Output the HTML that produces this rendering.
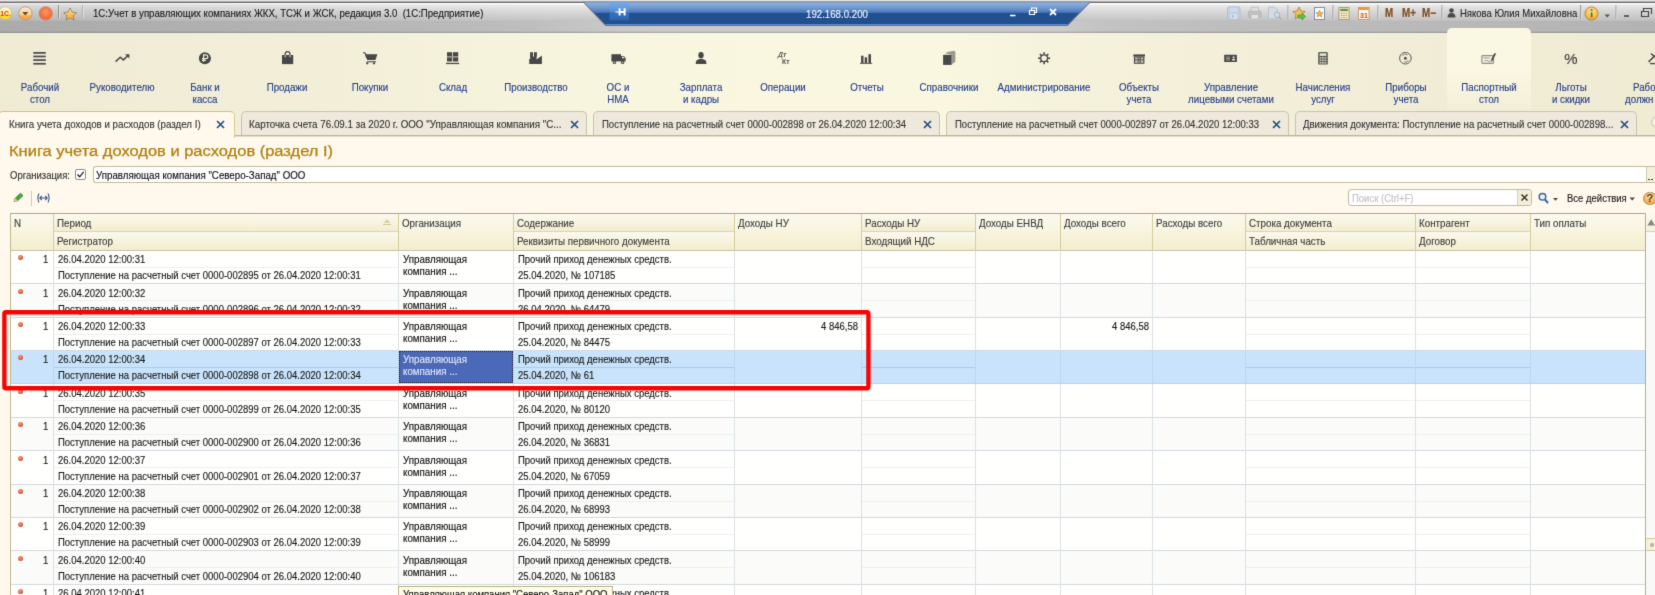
<!DOCTYPE html><html lang="ru"><head><meta charset="utf-8"><title>1C</title><style>
*{margin:0;padding:0;box-sizing:border-box}
html,body{width:1655px;height:595px;overflow:hidden}
body{filter:url(#soft)}
.t,.hd,.tabt,.sec{-webkit-text-stroke:.15px currentColor}
body{position:relative;background:#fff8ec;font-family:"Liberation Sans",sans-serif;font-size:11px;color:#1a1a1a}
.a{position:absolute}
.t{position:absolute;white-space:pre;line-height:12px;height:12px;transform:scaleX(.864);transform-origin:0 0}
.c{text-align:center}
.sec{position:absolute;top:81.900px;width:140px;text-align:center;color:#273f8c;font-size:11px;line-height:11.8px;white-space:pre;transform:scaleX(.885);transform-origin:50% 0}
.tab{position:absolute;top:111px;height:25px;border:1px solid #c9c3b0;border-bottom:none;border-radius:5px 5px 0 0;background:#efe9dc}
.tabt{position:absolute;top:118px;white-space:pre;line-height:12px;color:#363636;transform:scaleX(.868);transform-origin:0 0}
.hd{position:absolute;white-space:pre;line-height:12px;color:#3f3f3f;transform:scaleX(.89);transform-origin:0 0}
.vl{position:absolute;width:1px;background:#dbe1e4}
.hl{position:absolute;height:1px;background:#d3dce3}
.sl{position:absolute;height:1px;background:#eef1f3}
</style></head><body>
<svg width="0" height="0" style="position:absolute"><defs><filter id="soft" x="0" y="0" width="100%" height="100%" color-interpolation-filters="sRGB"><feConvolveMatrix order="3" kernelMatrix="0.0113 0.0839 0.0113 0.0839 0.6192 0.0839 0.0113 0.0839 0.0113" divisor="1" edgeMode="duplicate" preserveAlpha="true"/></filter></defs></svg>
<div class="a" style="left:0;top:0;width:1655px;height:595px;background:#fff8ec"></div>
<div class="a" style="left:0;top:0;width:1655px;height:33px;background:linear-gradient(#e6e6e6 0,#e6e6e6 1.3px,#707070 1.7px,#707070 2.6px,#ffffff 2.9px,#fdfdfd 4.2px,#ebebeb 5px,#dadada 11px,#c6c6c6 20px,#bdbdbd 21px)"></div>
<div class="a" style="left:0;top:2.500px;width:1655px;height:20px;background:linear-gradient(to right,rgba(0,0,0,.07) 0,rgba(0,0,0,.05) 200px,rgba(0,0,0,0) 560px,rgba(0,0,0,0) 1100px,rgba(0,0,0,.02) 1655px)"></div>
<div class="a" style="left:0;top:21px;width:1655px;height:12px;background:linear-gradient(to right,#ababab 0,#b0b0b0 200px,#b8b8b8 420px,#bebebe 530px,#c7c7c7 600px,#cbcbcb 660px,#cbcbcb 1060px,#c3c3c3 1100px,#c0c0c0 1160px,#bcbcbc 1300px,#b3b3b3 1655px)"></div>
<div class="a" style="left:0;top:30.500px;width:1655px;height:2.500px;background:linear-gradient(rgba(110,110,110,0),rgba(110,110,110,.5))"></div>
<svg class="a" style="left:0;top:0" width="1655" height="33" viewBox="0 0 1655 33"><defs><linearGradient id="bl" x1="0" y1="0" x2="0" y2="1"><stop offset="0" stop-color="#8fb2e0"/><stop offset="0.17" stop-color="#7aa2d6"/><stop offset="0.35" stop-color="#5c89c6"/><stop offset="0.46" stop-color="#4270b2"/><stop offset="0.49" stop-color="#21508f"/><stop offset="0.9" stop-color="#21508f"/><stop offset="0.96" stop-color="#1d4a87"/><stop offset="0.97" stop-color="#5f8ed0"/><stop offset="1" stop-color="#5f8ed0"/></linearGradient><linearGradient id="gb" x1="0" y1="0" x2="1" y2="0"><stop offset="0" stop-color="#adadad"/><stop offset="0.08" stop-color="#d3d3d3"/><stop offset="0.85" stop-color="#d3d3d3"/><stop offset="1" stop-color="#b4b4b4"/></linearGradient></defs><path d="M582.5 1.8 L1091 1.8 L1067.5 26 L605.5 26 Z" fill="#6b6e78"/><path d="M584 2.2 L1089.5 2.2 L1067 25 L606 25 Z" fill="url(#bl)"/><defs><linearGradient id="pg" x1="0" y1="0" x2="0" y2="1"><stop offset="0" stop-color="#74aae4"/><stop offset="0.5" stop-color="#5b92d6"/><stop offset="0.56" stop-color="#3a74c0"/><stop offset="1" stop-color="#2c63ad"/></linearGradient></defs><rect x="609.5" y="2.3" width="19.5" height="18" fill="url(#pg)"/><path d="M615.3 12 H619" stroke="#dfeaf8" stroke-width="1.3" fill="none"/><path d="M619.6 8.3 V15.6 M619.6 12 H624.6 M624.6 8.3 V15.6" stroke="#fff" stroke-width="2" fill="none"/><path d="M1010 15.5 H1015.5" stroke="#fff" stroke-width="1.6"/><path d="M1029.5 10.5 h5 v4 h-5 z M1031.5 10 v-2 h5 v4.5 h-2" stroke="#fff" stroke-width="1.2" fill="none"/><path d="M1050 9 L1056 15 M1056 9 L1050 15" stroke="#fff" stroke-width="1.8"/></svg>
<div class="t" style="left:806px;top:7.600px;color:#eef3fb;font-size:11px;transform:scaleX(.88)">192.168.0.200</div>
<svg class="a" style="left:0;top:0" width="95" height="33" viewBox="0 0 95 33"><defs><linearGradient id="og" x1="0" y1="0" x2="0" y2="1"><stop offset="0" stop-color="#fdeacb"/><stop offset="0.55" stop-color="#fbd39a"/><stop offset="0.7" stop-color="#f8ad4e"/><stop offset="1" stop-color="#f6a443"/></linearGradient><radialGradient id="rg" cx="0.5" cy="0.4" r="0.65"><stop offset="0" stop-color="#fb9a72"/><stop offset="0.55" stop-color="#f8743f"/><stop offset="1" stop-color="#f0602c"/></radialGradient><linearGradient id="yg" x1="0" y1="0" x2="0" y2="1"><stop offset="0" stop-color="#fff9d8"/><stop offset="0.5" stop-color="#fff0a0"/><stop offset="0.75" stop-color="#ffe22e"/><stop offset="1" stop-color="#fbd020"/></linearGradient><linearGradient id="sg" x1="0" y1="0" x2="0" y2="1"><stop offset="0" stop-color="#ffe7ae"/><stop offset="0.6" stop-color="#fbb848"/><stop offset="1" stop-color="#f5a535"/></linearGradient></defs><circle cx="5.2" cy="13.2" r="6.4" fill="url(#yg)" stroke="#cdb88a" stroke-width="0.7"/><text x="0.3" y="15.6" font-family="Liberation Sans" font-weight="bold" font-size="6.8" fill="#e8281c">1C.</text><circle cx="25.4" cy="13.4" r="6.7" fill="url(#og)" stroke="#a8978c" stroke-width="0.9"/><path d="M22.3 12.1 h6 l-3 3.5 z" fill="#5e4a38"/><circle cx="45.7" cy="13.4" r="6.7" fill="url(#rg)" stroke="#b59078" stroke-width="0.9"/><rect x="58" y="5" width="1" height="13" fill="#8e8e8e"/><rect x="59" y="5" width="1" height="13" fill="#e2e2e2"/><path d="M70.1 8 l1.95 4.1 4.5 .55 -3.3 3.1 .9 4.45 -4.05 -2.25 -4.05 2.25 .9 -4.45 -3.3 -3.1 4.5 -.55z" fill="url(#sg)" stroke="#8c7c62" stroke-width="0.8"/><rect x="82" y="5" width="1" height="13" fill="#b4b4b4"/><rect x="83" y="5" width="1" height="13" fill="#e0e0e0"/></svg>
<div class="t" style="left:92.500px;top:7px;color:#1c1c1c;transform:scaleX(.876)">1С:Учет в управляющих компаниях ЖКХ, ТСЖ и ЖСК, редакция 3.0  (1С:Предприятие)</div>
<svg class="a" style="left:1220px;top:0" width="435" height="33" viewBox="1220 0 435 33"><rect x="1227.500" y="6.800" width="12.500" height="12.500" rx="1.500" fill="#c3cee1" stroke="#afbdd4" stroke-width="0.900"/><rect x="1230" y="7.500" width="7.500" height="4.300" fill="#cfdaec"/><rect x="1230.500" y="14" width="6.500" height="5" fill="#d6dfee"/><rect x="1232" y="15" width="1.600" height="3" fill="#a9bad6"/><rect x="1248.500" y="11" width="12.500" height="6.500" rx="1.200" fill="#c2c2c2" stroke="#adadad" stroke-width="0.800"/><rect x="1251" y="7" width="7.500" height="4.500" fill="#dcdcdc" stroke="#b4b4b4" stroke-width="0.700"/><rect x="1251" y="14.500" width="7.500" height="4.500" fill="#e4e4e4" stroke="#b4b4b4" stroke-width="0.700"/><path d="M1268.500 7 h6 l2.800 2.800 v9 h-8.800z" fill="#d6dbe2" stroke="#b3bcc9" stroke-width="0.800"/><circle cx="1277" cy="14.800" r="2.700" fill="#d3dbe6" stroke="#a5b2c4" stroke-width="1"/><path d="M1279 17 l2.300 2.300" stroke="#b0a898" stroke-width="1.400"/><rect x="1287.500" y="5" width="1" height="14" fill="#9c9c9c"/><rect x="1288.500" y="5" width="1" height="14" fill="#dcdcdc"/><path d="M1299 7 l1.900 4 4.300 .5 -3.200 3 .9 4.300 -3.900 -2.200 -3.900 2.200 .9 -4.300 -3.200 -3 4.300 -.5z" fill="#f7c04a" stroke="#a0803c" stroke-width="0.8"/><path d="M1298 15 h4 v-2 l3.500 3.500 -3.500 3.500 v-2 h-4z" fill="#5fc040" stroke="#3a8a28" stroke-width="0.6"/><rect x="1314.500" y="7.500" width="10" height="12" fill="#fbfbfb" stroke="#6f86ad" stroke-width="0.9"/><path d="M1319.500 10.200 l1.100 2.300 2.500 .3 -1.800 1.700 .5 2.500 -2.300 -1.300 -2.300 1.300 .5 -2.500 -1.800 -1.700 2.500 -.3z" fill="#f4b53c" stroke="#a07a30" stroke-width="0.5"/><rect x="1332.500" y="5" width="1" height="14" fill="#9c9c9c"/><rect x="1333.500" y="5" width="1" height="14" fill="#dcdcdc"/><rect x="1339" y="7.500" width="10" height="12" fill="#f6efd2" stroke="#a89460" stroke-width="0.9"/><rect x="1340.300" y="8.800" width="7.500" height="2.400" fill="#5f9440"/><path d="M1341 13.500 h6 M1341 15.500 h6 M1341 17.500 h6" stroke="#c88a3a" stroke-width="1" stroke-dasharray="1.3 1"/><rect x="1358.500" y="7.500" width="10.500" height="12" fill="#fdf8ea" stroke="#b89a66" stroke-width="0.9"/><rect x="1358.500" y="7.500" width="10.500" height="2.500" fill="#e79a4a"/><text x="1360" y="18.300" font-family="Liberation Sans" font-size="7" font-weight="bold" fill="#d8451c">31</text><rect x="1377.500" y="5" width="1" height="14" fill="#9c9c9c"/><rect x="1378.500" y="5" width="1" height="14" fill="#dcdcdc"/><rect x="1441.500" y="5" width="1" height="14" fill="#9c9c9c"/><rect x="1442.500" y="5" width="1" height="14" fill="#dcdcdc"/><circle cx="1451.500" cy="10.500" r="2.300" fill="#4a4a4a"/><path d="M1447.500 17.500 q0 -4.500 4 -4.500 q4 0 4 4.500z" fill="#4a4a4a"/><rect x="1580" y="5" width="1" height="14" fill="#9c9c9c"/><rect x="1581" y="5" width="1" height="14" fill="#dcdcdc"/><circle cx="1591.500" cy="13.500" r="6.600" fill="url(#ig)" stroke="#b78a3a" stroke-width="0.9"/><defs><radialGradient id="ig" cx="0.5" cy="0.35" r="0.7"><stop offset="0" stop-color="#ffe9a8"/><stop offset="0.7" stop-color="#f4b544"/><stop offset="1" stop-color="#d98f2c"/></radialGradient></defs><rect x="1590.700" y="12.300" width="1.800" height="5" fill="#4d7a1c"/><rect x="1590.700" y="9.300" width="1.800" height="1.800" fill="#4d7a1c"/><path d="M1604.500 14.500 h5.500 l-2.750 3z" fill="#555"/><rect x="1615.500" y="5" width="1" height="14" fill="#9c9c9c"/><rect x="1616.500" y="5" width="1" height="14" fill="#dcdcdc"/><path d="M1624 16 h5" stroke="#444" stroke-width="1.600"/><path d="M1641.500 11.500 h7 v5 h-7z M1643.500 11 v-2.500 h8 v5.500" stroke="#444" stroke-width="1.200" fill="none"/></svg>
<div class="t" style="left:1384.500px;top:6.500px;font-weight:bold;color:#7d4a18;font-size:12px;transform:scaleX(.82)">M</div>
<div class="t" style="left:1402px;top:6.500px;font-weight:bold;color:#7d4a18;font-size:12px;transform:scaleX(.82)">M+</div>
<div class="t" style="left:1422px;top:6.500px;font-weight:bold;color:#7d4a18;font-size:12px;transform:scaleX(.82)">M−</div>
<div class="t" style="left:1460px;top:7px;color:#2a2a2a">Някова Юлия Михайловна</div>
<div class="a" style="left:0;top:33px;width:1655px;height:103px;background:linear-gradient(to right,#f0ebd3 0,#f2eed8 300px,#f5f2dc 450px,#f9f6e0 650px,#faf7e1 750px,#faf7e1 950px,#f6f3dd 1040px,#f3efd9 1230px,#f1ecd5 1450px,#f0ebd3 1655px)"></div>
<div class="a" style="left:1447px;top:28px;width:84px;height:84px;background:linear-gradient(#faf7e2 0,#faf7e2 50%,#f6f2dc 80%,#f2edd6 100%);border-radius:5px 5px 0 0"></div>
<div class="sec" style="left:-30px">Рабочий
стол</div>
<div class="sec" style="left:52px">Руководителю</div>
<div class="sec" style="left:135px">Банк и
касса</div>
<div class="sec" style="left:217px">Продажи</div>
<div class="sec" style="left:300px">Покупки</div>
<div class="sec" style="left:383px">Склад</div>
<div class="sec" style="left:466px">Производство</div>
<div class="sec" style="left:548px">ОС и
НМА</div>
<div class="sec" style="left:631px">Зарплата
и кадры</div>
<div class="sec" style="left:713px">Операции</div>
<div class="sec" style="left:797px">Отчеты</div>
<div class="sec" style="left:879px">Справочники</div>
<div class="sec" style="left:974px">Администрирование</div>
<div class="sec" style="left:1069px">Объекты
учета</div>
<div class="sec" style="left:1161px">Управление
лицевыми счетами</div>
<div class="sec" style="left:1253px">Начисления
услуг</div>
<div class="sec" style="left:1336px">Приборы
учета</div>
<div class="sec" style="left:1419px">Паспортный
стол</div>
<div class="sec" style="left:1501px">Льготы
и скидки</div>
<div class="sec" style="left:1633px;width:60px;text-align:left;transform-origin:0 0">Рабо</div>
<div class="sec" style="left:1624.700px;top:93.700px;width:60px;text-align:left;transform-origin:0 0">должн</div>
<svg class="a" style="left:0;top:40px" width="1655" height="40" viewBox="0 40 1655 40"><rect x="33.300" y="52.0" width="12.500" height="1.700" fill="#474747"/><rect x="33.300" y="55.6" width="12.500" height="1.700" fill="#474747"/><rect x="33.300" y="59.2" width="12.500" height="1.700" fill="#474747"/><rect x="33.300" y="62.9" width="12.500" height="1.700" fill="#474747"/><path d="M115.600 61.600 L120.300 57.300 L123.400 59.900 L128.300 55.300" stroke="#474747" stroke-width="1.500" fill="none"/><path d="M125 54.200 H129.400 V58.600 Z" fill="#474747"/><circle cx="204.900" cy="58.200" r="6" fill="#474747"/><path d="M203.600 61.800 V54.900 H205.700 Q207.800 54.900 207.800 56.800 Q207.800 58.700 205.700 58.700 H202 M202 60.300 H205.800" stroke="#f4f0d9" stroke-width="1.200" fill="none"/><rect x="282" y="55" width="11.200" height="9.100" fill="#474747"/><path d="M285.200 57 V54 Q285.200 51.600 287.600 51.600 Q290 51.600 290 54 V57" stroke="#474747" stroke-width="1.200" fill="none"/><path d="M285.200 57.200 V55.200 M290 57.200 V55.200" stroke="#f4f0d9" stroke-width="1" fill="none"/><path d="M363.200 52.600 L365.300 53.200 L366.700 58" stroke="#474747" stroke-width="1.200" fill="none"/><path d="M365.400 54.200 H377.400 L375.400 60 H367.200 Z" fill="#474747"/><path d="M366.800 61.800 H376" stroke="#474747" stroke-width="1.100"/><circle cx="367.200" cy="63.300" r="1.150" fill="#474747"/><circle cx="374" cy="63.300" r="1.150" fill="#474747"/><rect x="447" y="52.200" width="5.200" height="4.200" fill="#474747"/><rect x="453" y="52.200" width="5.200" height="4.200" fill="#474747"/><rect x="447" y="57.300" width="5.200" height="4.200" fill="#474747"/><rect x="453" y="57.300" width="5.200" height="4.200" fill="#474747"/><rect x="447" y="56.400" width="11.200" height="0.900" fill="#8c8a7c"/><rect x="446" y="62.800" width="13.200" height="1.300" fill="#474747"/><path d="M529.200 64 V59.200 L536.600 54.400 V59.400 L541.900 55.600 V64 Z" fill="#474747"/><rect x="530.100" y="52.200" width="2.900" height="6.500" fill="#474747"/><rect x="534" y="52.200" width="2.900" height="4" fill="#474747"/><rect x="611.400" y="54.200" width="9.600" height="7.200" fill="#474747"/><path d="M621 56 H624 L625.600 58.200 V61.400 H621 Z" fill="#474747"/><path d="M622 56.800 H623.700 L624.700 58.300 H622 Z" fill="#f4f0d9"/><circle cx="614.400" cy="62.400" r="1.700" fill="#474747"/><circle cx="622.600" cy="62.400" r="1.700" fill="#474747"/><circle cx="614.400" cy="62.400" r="0.600" fill="#f4f0d9"/><circle cx="622.600" cy="62.400" r="0.600" fill="#f4f0d9"/><ellipse cx="701" cy="55.200" rx="2.700" ry="3.100" fill="#474747"/><path d="M695.800 64 V62.600 Q695.800 59.400 701 58.800 Q706.400 59.400 706.400 62.600 V64 Z" fill="#474747"/><rect x="861.100" y="55.700" width="2.400" height="7.400" fill="#474747"/><rect x="864.700" y="57.300" width="2.400" height="5.800" fill="#474747"/><rect x="868.400" y="54.200" width="2.600" height="8.900" fill="#474747"/><rect x="860" y="62.900" width="12.200" height="0.900" fill="#474747"/><path d="M945 53.200 L953.600 51.600 H955.400 V61.800 L951.600 64.400 V54.800 Z" fill="#9b9a8c"/><path d="M946.400 52.600 L954.600 51.200" stroke="#6a6a60" stroke-width="0.600"/><rect x="943.100" y="54.800" width="8.500" height="10.100" fill="#474747"/><path d="M1047.70 58.20 L1050.10 58.20" stroke="#474747" stroke-width="1.600"/><path d="M1046.65 60.75 L1048.34 62.44" stroke="#474747" stroke-width="1.600"/><path d="M1044.10 61.80 L1044.10 64.20" stroke="#474747" stroke-width="1.600"/><path d="M1041.55 60.75 L1039.86 62.44" stroke="#474747" stroke-width="1.600"/><path d="M1040.50 58.20 L1038.10 58.20" stroke="#474747" stroke-width="1.600"/><path d="M1041.55 55.65 L1039.86 53.96" stroke="#474747" stroke-width="1.600"/><path d="M1044.10 54.60 L1044.10 52.20" stroke="#474747" stroke-width="1.600"/><path d="M1046.65 55.65 L1048.34 53.96" stroke="#474747" stroke-width="1.600"/><circle cx="1044.1" cy="58.2" r="3.400" fill="none" stroke="#474747" stroke-width="1.300"/><rect x="1133.300" y="54.400" width="11.700" height="2.100" fill="#474747"/><rect x="1133.900" y="56.500" width="10.500" height="7.300" fill="#474747"/><rect x="1135.1" y="57.5" width="2.6" height="1.9" fill="#c9c6b2"/><rect x="1138.6" y="57.5" width="1.1" height="1.9" fill="#c9c6b2"/><rect x="1140.7" y="57.5" width="2.6" height="1.9" fill="#c9c6b2"/><rect x="1135.1" y="60.3" width="2.6" height="2.5" fill="#c9c6b2"/><rect x="1138.6" y="60.3" width="1.1" height="2.5" fill="#c9c6b2"/><rect x="1140.7" y="60.3" width="2.6" height="2.5" fill="#c9c6b2"/><rect x="1224.200" y="54.800" width="12.700" height="7.100" rx="0.500" fill="#474747"/><path d="M1226 57 H1230 M1226 58.500 H1230 M1226 60 H1230" stroke="#bdbbac" stroke-width="0.700"/><circle cx="1233.600" cy="57.200" r="1" fill="#e9e5cf"/><path d="M1231.900 60.600 Q1231.900 58.600 1233.600 58.600 Q1235.300 58.600 1235.300 60.600Z" fill="#e9e5cf"/><rect x="1318.200" y="51.900" width="9.600" height="12.700" rx="1.200" fill="#5a5a56"/><rect x="1319.700" y="53.300" width="6.600" height="2.600" fill="#e9e5cf"/><rect x="1319.6" y="57.2" width="1.700" height="1.600" fill="#cfccb8"/><rect x="1322.0" y="57.2" width="1.700" height="1.600" fill="#cfccb8"/><rect x="1324.5" y="57.2" width="1.700" height="1.600" fill="#cfccb8"/><rect x="1319.6" y="59.6" width="1.700" height="1.600" fill="#cfccb8"/><rect x="1322.0" y="59.6" width="1.700" height="1.600" fill="#cfccb8"/><rect x="1324.5" y="59.6" width="1.700" height="1.600" fill="#cfccb8"/><rect x="1319.6" y="62.0" width="1.700" height="1.600" fill="#cfccb8"/><rect x="1322.0" y="62.0" width="1.700" height="1.600" fill="#cfccb8"/><rect x="1324.5" y="62.0" width="1.700" height="1.600" fill="#cfccb8"/><circle cx="1405.400" cy="58.200" r="5.800" fill="none" stroke="#5a5a56" stroke-width="1"/><circle cx="1405.400" cy="58.200" r="1.500" fill="#555"/><path d="M1402.200 55.600 A4 4 0 0 1 1407.600 54.800 M1408.600 60.600 A4 4 0 0 1 1404.400 62" stroke="#6a6a64" stroke-width="0.900" fill="none"/><rect x="1481.900" y="55.700" width="11.600" height="7.600" rx="0.800" fill="#f4f1de" stroke="#8f8f8a" stroke-width="1.200"/><path d="M1483.600 58 H1489.500 M1484.500 61 Q1486.500 59.600 1488 61 T1491 60.600" stroke="#8f8f8a" stroke-width="0.900" fill="none"/><path d="M1495.300 53.400 L1491.700 60.200" stroke="#4a4a4a" stroke-width="1.800"/><path d="M1491.900 59.600 L1490.800 62 L1492.800 60.400Z" fill="#4a4a4a"/><path d="M1648.500 62 L1655 55.500 M1651 53.500 L1655 57" stroke="#474747" stroke-width="1.600"/><path d="M1650 63.600 H1655" stroke="#474747" stroke-width="1.300"/></svg><div class="a" style="left:776.800px;top:50.300px;font-size:7.400px;line-height:9px;font-weight:bold;color:#58584f;white-space:pre;transform:skewX(-12deg) scaleX(.95);transform-origin:0 100%">Дт</div><div class="a" style="left:782.400px;top:58.300px;font-size:7.200px;line-height:8px;font-weight:bold;color:#4a4a44;white-space:pre;transform:scaleX(.95);transform-origin:0 0">Кт</div><div class="a" style="left:1563px;top:50.800px;width:16px;height:16px;font-size:15px;line-height:16px;color:#444;text-align:center;-webkit-text-stroke:.2px #444">%</div>
<div class="tab" style="left:240.5px;width:346.9px"></div>
<div class="tabt" style="left:249.3px;transform:scaleX(0.89)">Карточка счета 76.09.1 за 2020 г. ООО "Управляющая компания "С...</div>
<svg class="a" style="left:569.9px;top:120px" width="9" height="9" viewBox="0 0 9 9"><path d="M1 1 L8 8 M8 1 L1 8" stroke="#1d4f86" stroke-width="1.7"/></svg>
<div class="tab" style="left:593.0px;width:347.0px"></div>
<div class="tabt" style="left:601.8px;transform:scaleX(0.868)">Поступление на расчетный счет 0000-002898 от 26.04.2020 12:00:34</div>
<svg class="a" style="left:922.5px;top:120px" width="9" height="9" viewBox="0 0 9 9"><path d="M1 1 L8 8 M8 1 L1 8" stroke="#1d4f86" stroke-width="1.7"/></svg>
<div class="tab" style="left:945.5px;width:343.5px"></div>
<div class="tabt" style="left:954.6px;transform:scaleX(0.868)">Поступление на расчетный счет 0000-002897 от 26.04.2020 12:00:33</div>
<svg class="a" style="left:1271.5px;top:120px" width="9" height="9" viewBox="0 0 9 9"><path d="M1 1 L8 8 M8 1 L1 8" stroke="#1d4f86" stroke-width="1.7"/></svg>
<div class="tab" style="left:1294.6px;width:342.9px"></div>
<div class="tabt" style="left:1302.8px;transform:scaleX(0.873)">Движения документа: Поступление на расчетный счет 0000-002898...</div>
<svg class="a" style="left:1620.0px;top:120px" width="9" height="9" viewBox="0 0 9 9"><path d="M1 1 L8 8 M8 1 L1 8" stroke="#1d4f86" stroke-width="1.7"/></svg>
<div class="a" style="left:0;top:135px;width:1655px;height:2px;background:linear-gradient(#bdb496 0,#bdb496 50%,rgba(189,180,150,.4) 50%,rgba(189,180,150,.4) 100%)"></div>
<div class="a" style="left:-2px;top:111.300px;width:237px;height:26.700px;border:1px solid #dccb92;border-top:1.600px solid #d6c071;border-bottom:none;border-radius:5px 5px 0 0;background:#fff8ec"></div>
<div class="tabt" style="left:8.500px;transform:scaleX(.886)">Книга учета доходов и расходов (раздел I)</div>
<svg class="a" style="left:216px;top:120px" width="9" height="9" viewBox="0 0 9 9"><path d="M1 1 L8 8 M8 1 L1 8" stroke="#1d4f86" stroke-width="1.7"/></svg>
<div class="a" style="left:1651px;top:116px;width:12px;height:12px;border:1px solid #c9c4b4;border-radius:6px;background:#f4efe0"></div>
<div class="a" style="left:9px;top:141.600px;font-size:14px;line-height:18px;color:#b07f10;-webkit-text-stroke:.25px #b07f10;white-space:pre;transform:scaleX(1.177);transform-origin:0 0" id="bigtitle">Книга учета доходов и расходов (раздел I)</div>
<div class="t" style="left:10px;top:169px;color:#333">Организация:</div>
<div class="a" style="left:75px;top:169px;width:11px;height:11px;border:1px solid #8e8e8e;border-radius:2px;background:#fff"></div>
<svg class="a" style="left:76px;top:170px" width="9" height="9" viewBox="0 0 9 9"><path d="M1.500 4.500 L3.700 6.800 L7.600 1.800" stroke="#222" stroke-width="1.300" fill="none"/></svg>
<div class="a" style="left:93px;top:166px;width:1562px;height:17px;border:1px solid #c4bc9f;border-right:none;border-radius:3px 0 0 3px;background:#fff"></div>
<div class="t" style="left:96.200px;top:169px;color:#111;transform:scaleX(.885)">Управляющая компания "Северо-Запад" ООО</div>
<div class="a" style="left:1646px;top:167px;width:9px;height:15px;background:#f3efda;border-left:1px solid #d2cbb0"></div>
<div class="a" style="left:1648px;top:178.600px;width:1.500px;height:1.500px;background:#3a3a3a"></div>
<div class="a" style="left:1651.200px;top:178.600px;width:1.500px;height:1.500px;background:#3a3a3a"></div>
<svg class="a" style="left:12px;top:192px" width="14" height="12" viewBox="0 0 14 12"><path d="M2 9.500 L3.200 6.200 L8.500 1.200 L11 3.600 L5.600 8.800 Z" fill="#3fa63a" stroke="#2a7a26" stroke-width="0.7"/><path d="M2 9.500 L3.200 6.200 L5.600 8.800Z" fill="#e9d9a0"/></svg>
<div class="a" style="left:31px;top:191px;width:1px;height:15px;background:#cfc9b8"></div>
<svg class="a" style="left:36px;top:192px" width="15" height="12" viewBox="0 0 15 12"><path d="M3 1.500 Q0.800 6 3 10.500 M12 1.500 Q14.200 6 12 10.500" stroke="#3a5a8a" stroke-width="1.100" fill="none"/><path d="M3.800 6 H11.200 M5.800 4 L3.800 6 L5.800 8 M9.200 4 L11.200 6 L9.200 8" stroke="#3a5a8a" stroke-width="1.100" fill="none"/></svg>
<div class="a" style="left:1348px;top:189px;width:184px;height:17px;border:1px solid #c0bba8;border-radius:3px;background:#fff"></div>
<div class="t" style="left:1352px;top:192px;color:#c2c2c2">Поиск (Ctrl+F)</div>
<div class="a" style="left:1517px;top:190px;width:14px;height:15px;background:#f3eed6;border-left:1px solid #d5cfb8;border-radius:0 3px 3px 0"></div>
<svg class="a" style="left:1520px;top:193px" width="9" height="9" viewBox="0 0 9 9"><path d="M1.500 1.500 L7.500 7.500 M7.500 1.500 L1.500 7.500" stroke="#333" stroke-width="1.500"/></svg>
<svg class="a" style="left:1536px;top:191px" width="26" height="14" viewBox="0 0 26 14"><circle cx="6.500" cy="5.800" r="3.300" fill="#e8f0fa" stroke="#3a66a8" stroke-width="1.500"/><path d="M9 8.500 L12 12" stroke="#3a66a8" stroke-width="2"/><path d="M17 7 h5 l-2.500 2.800z" fill="#444"/></svg>
<div class="t" style="left:1567px;top:192px;color:#222">Все действия</div>
<svg class="a" style="left:1629px;top:197px" width="7" height="5" viewBox="0 0 7 5"><path d="M0.500 0.500 h5.500 l-2.750 3z" fill="#444"/></svg>
<div class="a" style="left:1643px;top:191.500px;width:13.500px;height:13.500px;border-radius:7px;background:radial-gradient(circle at 50% 35%,#ffe6b0,#f3b050 65%,#dd8f30);border:1px solid #b98a52"></div>
<div class="t" style="left:1646.500px;top:192.300px;color:#5a4632;font-weight:bold;font-size:11px;transform:none">?</div>
<div class="a" style="left:10px;top:251px;width:1645px;height:344px;background:#fff"></div>
<div class="a" style="left:10px;top:213px;width:1645px;height:38px;background:linear-gradient(#fbf8ee 0,#f9f6e4 35%,#f6f2d8 65%,#f4eece 100%);border-top:1px solid #aaa785;border-bottom:1px solid #c6c3ab"></div>
<div class="a" style="left:54px;top:214px;width:344px;height:18px;background:linear-gradient(#fbf9ee,#f7f4df 50%,#f3edcf);border-bottom:1px solid #d9d3b8"></div>
<div class="a" style="left:54px;top:232px;width:344px;height:18px;background:linear-gradient(#fbf8ee,#f7f3dd 50%,#f3edce)"></div>
<div class="hd" style="left:57px;top:216.500px">Период</div>
<div class="hd" style="left:57px;top:235px">Регистратор</div>
<div class="a" style="left:514px;top:214px;width:220px;height:18px;background:linear-gradient(#fbf9ee,#f7f4df 50%,#f3edcf);border-bottom:1px solid #d9d3b8"></div>
<div class="a" style="left:514px;top:232px;width:220px;height:18px;background:linear-gradient(#fbf8ee,#f7f3dd 50%,#f3edce)"></div>
<div class="hd" style="left:517px;top:216.500px">Содержание</div>
<div class="hd" style="left:517px;top:235px">Реквизиты первичного документа</div>
<div class="a" style="left:862px;top:214px;width:113px;height:18px;background:linear-gradient(#fbf9ee,#f7f4df 50%,#f3edcf);border-bottom:1px solid #d9d3b8"></div>
<div class="a" style="left:862px;top:232px;width:113px;height:18px;background:linear-gradient(#fbf8ee,#f7f3dd 50%,#f3edce)"></div>
<div class="hd" style="left:865px;top:216.500px">Расходы НУ</div>
<div class="hd" style="left:865px;top:235px">Входящий НДС</div>
<div class="a" style="left:1246px;top:214px;width:169px;height:18px;background:linear-gradient(#fbf9ee,#f7f4df 50%,#f3edcf);border-bottom:1px solid #d9d3b8"></div>
<div class="a" style="left:1246px;top:232px;width:169px;height:18px;background:linear-gradient(#fbf8ee,#f7f3dd 50%,#f3edce)"></div>
<div class="hd" style="left:1249px;top:216.500px">Строка документа</div>
<div class="hd" style="left:1249px;top:235px">Табличная часть</div>
<div class="a" style="left:1416px;top:214px;width:114px;height:18px;background:linear-gradient(#fbf9ee,#f7f4df 50%,#f3edcf);border-bottom:1px solid #d9d3b8"></div>
<div class="a" style="left:1416px;top:232px;width:114px;height:18px;background:linear-gradient(#fbf8ee,#f7f3dd 50%,#f3edce)"></div>
<div class="hd" style="left:1419px;top:216.500px">Контрагент</div>
<div class="hd" style="left:1419px;top:235px">Договор</div>
<div class="hd" style="left:14px;top:216.500px">N</div>
<div class="hd" style="left:402px;top:216.500px">Организация</div>
<div class="hd" style="left:738px;top:216.500px">Доходы НУ</div>
<div class="hd" style="left:979px;top:216.500px">Доходы ЕНВД</div>
<div class="hd" style="left:1064px;top:216.500px">Доходы всего</div>
<div class="hd" style="left:1156px;top:216.500px">Расходы всего</div>
<div class="hd" style="left:1534px;top:216.500px">Тип оплаты</div>
<div class="a" style="left:53px;top:214px;width:1px;height:37px;background:#d6cca0"></div>
<div class="a" style="left:398px;top:214px;width:1px;height:37px;background:#d6cca0"></div>
<div class="a" style="left:513px;top:214px;width:1px;height:37px;background:#d6cca0"></div>
<div class="a" style="left:734px;top:214px;width:1px;height:37px;background:#d6cca0"></div>
<div class="a" style="left:861px;top:214px;width:1px;height:37px;background:#d6cca0"></div>
<div class="a" style="left:975px;top:214px;width:1px;height:37px;background:#d6cca0"></div>
<div class="a" style="left:1060px;top:214px;width:1px;height:37px;background:#d6cca0"></div>
<div class="a" style="left:1152px;top:214px;width:1px;height:37px;background:#d6cca0"></div>
<div class="a" style="left:1245px;top:214px;width:1px;height:37px;background:#d6cca0"></div>
<div class="a" style="left:1415px;top:214px;width:1px;height:37px;background:#d6cca0"></div>
<div class="a" style="left:1530px;top:214px;width:1px;height:37px;background:#d6cca0"></div>
<div class="a" style="left:1645px;top:214px;width:1px;height:37px;background:#d6cca0"></div>
<svg class="a" style="left:382px;top:218px" width="10" height="8" viewBox="0 0 10 8"><path d="M5 1 L8.500 5 H1.500Z" fill="#d9cfa6"/><path d="M1 6.500 H9" stroke="#cfc498" stroke-width="1"/></svg>
<div class="a" style="left:10px;top:213px;width:1px;height:382px;background:#c2b88e"></div>
<div class="a" style="left:11px;top:251px;width:1634px;height:32px;background:#fffffe"></div>
<div class="hl" style="left:11px;top:283px;width:1634px;background:#d2d9dd"></div>
<div class="sl" style="left:54px;top:267px;width:344px;background:#eef0f1"></div>
<div class="sl" style="left:514px;top:267px;width:220px;background:#eef0f1"></div>
<div class="sl" style="left:862px;top:267px;width:113px;background:#eef0f1"></div>
<div class="sl" style="left:1246px;top:267px;width:169px;background:#eef0f1"></div>
<div class="sl" style="left:1416px;top:267px;width:114px;background:#eef0f1"></div>
<div class="a" style="left:18px;top:254.7px;width:5px;height:5px;border-radius:3px;background:radial-gradient(circle at 40% 35%,#f5a080,#d64a2a 70%)"></div>
<div class="t" style="left:43px;top:252.5px">1</div>
<div class="t" style="left:57.500px;top:252.5px">26.04.2020 12:00:31</div>
<div class="t" style="left:57.500px;top:269.4px">Поступление на расчетный счет 0000-002895 от 26.04.2020 12:00:31</div>
<div class="t" style="left:402.500px;top:252.5px;color:#111;transform:scaleX(.89)">Управляющая</div>
<div class="t" style="left:402.500px;top:264.9px;color:#111;transform:scaleX(.89)">компания ...</div>
<div class="t" style="left:517.500px;top:252.5px">Прочий приход денежных средств.</div>
<div class="t" style="left:517.500px;top:269.4px">25.04.2020, № 107185</div>
<div class="a" style="left:11px;top:284px;width:1634px;height:33px;background:#fbfbfa"></div>
<div class="hl" style="left:11px;top:317px;width:1634px;background:#d2d9dd"></div>
<div class="sl" style="left:54px;top:300px;width:344px;background:#eef0f1"></div>
<div class="sl" style="left:514px;top:300px;width:220px;background:#eef0f1"></div>
<div class="sl" style="left:862px;top:300px;width:113px;background:#eef0f1"></div>
<div class="sl" style="left:1246px;top:300px;width:169px;background:#eef0f1"></div>
<div class="sl" style="left:1416px;top:300px;width:114px;background:#eef0f1"></div>
<div class="a" style="left:18px;top:288.7px;width:5px;height:5px;border-radius:3px;background:radial-gradient(circle at 40% 35%,#f5a080,#d64a2a 70%)"></div>
<div class="t" style="left:43px;top:286.5px">1</div>
<div class="t" style="left:57.500px;top:286.5px">26.04.2020 12:00:32</div>
<div class="t" style="left:57.500px;top:303.4px">Поступление на расчетный счет 0000-002896 от 26.04.2020 12:00:32</div>
<div class="t" style="left:402.500px;top:286.5px;color:#111;transform:scaleX(.89)">Управляющая</div>
<div class="t" style="left:402.500px;top:298.9px;color:#111;transform:scaleX(.89)">компания ...</div>
<div class="t" style="left:517.500px;top:286.5px">Прочий приход денежных средств.</div>
<div class="t" style="left:517.500px;top:303.4px">26.04.2020, № 64479</div>
<div class="a" style="left:11px;top:318px;width:1634px;height:32px;background:#fffffe"></div>
<div class="hl" style="left:11px;top:350px;width:1634px;background:#d2d9dd"></div>
<div class="sl" style="left:54px;top:334px;width:344px;background:#eef0f1"></div>
<div class="sl" style="left:514px;top:334px;width:220px;background:#eef0f1"></div>
<div class="sl" style="left:862px;top:334px;width:113px;background:#eef0f1"></div>
<div class="sl" style="left:1246px;top:334px;width:169px;background:#eef0f1"></div>
<div class="sl" style="left:1416px;top:334px;width:114px;background:#eef0f1"></div>
<div class="a" style="left:18px;top:321.7px;width:5px;height:5px;border-radius:3px;background:radial-gradient(circle at 40% 35%,#f5a080,#d64a2a 70%)"></div>
<div class="t" style="left:43px;top:319.5px">1</div>
<div class="t" style="left:57.500px;top:319.5px">26.04.2020 12:00:33</div>
<div class="t" style="left:57.500px;top:336.4px">Поступление на расчетный счет 0000-002897 от 26.04.2020 12:00:33</div>
<div class="t" style="left:402.500px;top:319.5px;color:#111;transform:scaleX(.89)">Управляющая</div>
<div class="t" style="left:402.500px;top:331.9px;color:#111;transform:scaleX(.89)">компания ...</div>
<div class="t" style="left:517.500px;top:319.5px">Прочий приход денежных средств.</div>
<div class="t" style="left:517.500px;top:336.4px">25.04.2020, № 84475</div>
<div class="t" style="left:821px;top:319.5px">4 846,58</div>
<div class="t" style="left:1112px;top:319.5px">4 846,58</div>
<div class="a" style="left:11px;top:351px;width:1634px;height:32px;background:#c8e3fb"></div>
<div class="hl" style="left:11px;top:383px;width:1634px;background:#b9d3ea"></div>
<div class="sl" style="left:54px;top:367px;width:344px;background:#aecbe8"></div>
<div class="sl" style="left:514px;top:367px;width:220px;background:#aecbe8"></div>
<div class="sl" style="left:862px;top:367px;width:113px;background:#aecbe8"></div>
<div class="sl" style="left:1246px;top:367px;width:169px;background:#aecbe8"></div>
<div class="sl" style="left:1416px;top:367px;width:114px;background:#aecbe8"></div>
<div class="a" style="left:399px;top:351px;width:114px;height:32px;background:#4c68b8;outline:1px dotted #222;outline-offset:-1px"></div>
<div class="a" style="left:18px;top:354.7px;width:5px;height:5px;border-radius:3px;background:radial-gradient(circle at 40% 35%,#f5a080,#d64a2a 70%)"></div>
<div class="t" style="left:43px;top:352.5px">1</div>
<div class="t" style="left:57.500px;top:352.5px">26.04.2020 12:00:34</div>
<div class="t" style="left:57.500px;top:369.4px">Поступление на расчетный счет 0000-002898 от 26.04.2020 12:00:34</div>
<div class="t" style="left:402.500px;top:352.5px;color:#dde5f6;transform:scaleX(.89)">Управляющая</div>
<div class="t" style="left:402.500px;top:364.9px;color:#dde5f6;transform:scaleX(.89)">компания ...</div>
<div class="t" style="left:517.500px;top:352.5px">Прочий приход денежных средств.</div>
<div class="t" style="left:517.500px;top:369.4px">25.04.2020, № 61</div>
<div class="a" style="left:11px;top:384px;width:1634px;height:33px;background:#fffffe"></div>
<div class="hl" style="left:11px;top:417px;width:1634px;background:#d2d9dd"></div>
<div class="sl" style="left:54px;top:400px;width:344px;background:#eef0f1"></div>
<div class="sl" style="left:514px;top:400px;width:220px;background:#eef0f1"></div>
<div class="sl" style="left:862px;top:400px;width:113px;background:#eef0f1"></div>
<div class="sl" style="left:1246px;top:400px;width:169px;background:#eef0f1"></div>
<div class="sl" style="left:1416px;top:400px;width:114px;background:#eef0f1"></div>
<div class="a" style="left:18px;top:388.7px;width:5px;height:5px;border-radius:3px;background:radial-gradient(circle at 40% 35%,#f5a080,#d64a2a 70%)"></div>
<div class="t" style="left:43px;top:386.5px">1</div>
<div class="t" style="left:57.500px;top:386.5px">26.04.2020 12:00:35</div>
<div class="t" style="left:57.500px;top:403.4px">Поступление на расчетный счет 0000-002899 от 26.04.2020 12:00:35</div>
<div class="t" style="left:402.500px;top:386.5px;color:#111;transform:scaleX(.89)">Управляющая</div>
<div class="t" style="left:402.500px;top:398.9px;color:#111;transform:scaleX(.89)">компания ...</div>
<div class="t" style="left:517.500px;top:386.5px">Прочий приход денежных средств.</div>
<div class="t" style="left:517.500px;top:403.4px">26.04.2020, № 80120</div>
<div class="a" style="left:11px;top:418px;width:1634px;height:32px;background:#fbfbfa"></div>
<div class="hl" style="left:11px;top:450px;width:1634px;background:#d2d9dd"></div>
<div class="sl" style="left:54px;top:434px;width:344px;background:#eef0f1"></div>
<div class="sl" style="left:514px;top:434px;width:220px;background:#eef0f1"></div>
<div class="sl" style="left:862px;top:434px;width:113px;background:#eef0f1"></div>
<div class="sl" style="left:1246px;top:434px;width:169px;background:#eef0f1"></div>
<div class="sl" style="left:1416px;top:434px;width:114px;background:#eef0f1"></div>
<div class="a" style="left:18px;top:421.7px;width:5px;height:5px;border-radius:3px;background:radial-gradient(circle at 40% 35%,#f5a080,#d64a2a 70%)"></div>
<div class="t" style="left:43px;top:419.5px">1</div>
<div class="t" style="left:57.500px;top:419.5px">26.04.2020 12:00:36</div>
<div class="t" style="left:57.500px;top:436.4px">Поступление на расчетный счет 0000-002900 от 26.04.2020 12:00:36</div>
<div class="t" style="left:402.500px;top:419.5px;color:#111;transform:scaleX(.89)">Управляющая</div>
<div class="t" style="left:402.500px;top:431.9px;color:#111;transform:scaleX(.89)">компания ...</div>
<div class="t" style="left:517.500px;top:419.5px">Прочий приход денежных средств.</div>
<div class="t" style="left:517.500px;top:436.4px">26.04.2020, № 36831</div>
<div class="a" style="left:11px;top:451px;width:1634px;height:33px;background:#fffffe"></div>
<div class="hl" style="left:11px;top:484px;width:1634px;background:#d2d9dd"></div>
<div class="sl" style="left:54px;top:467px;width:344px;background:#eef0f1"></div>
<div class="sl" style="left:514px;top:467px;width:220px;background:#eef0f1"></div>
<div class="sl" style="left:862px;top:467px;width:113px;background:#eef0f1"></div>
<div class="sl" style="left:1246px;top:467px;width:169px;background:#eef0f1"></div>
<div class="sl" style="left:1416px;top:467px;width:114px;background:#eef0f1"></div>
<div class="a" style="left:18px;top:455.7px;width:5px;height:5px;border-radius:3px;background:radial-gradient(circle at 40% 35%,#f5a080,#d64a2a 70%)"></div>
<div class="t" style="left:43px;top:453.5px">1</div>
<div class="t" style="left:57.500px;top:453.5px">26.04.2020 12:00:37</div>
<div class="t" style="left:57.500px;top:470.4px">Поступление на расчетный счет 0000-002901 от 26.04.2020 12:00:37</div>
<div class="t" style="left:402.500px;top:453.5px;color:#111;transform:scaleX(.89)">Управляющая</div>
<div class="t" style="left:402.500px;top:465.9px;color:#111;transform:scaleX(.89)">компания ...</div>
<div class="t" style="left:517.500px;top:453.5px">Прочий приход денежных средств.</div>
<div class="t" style="left:517.500px;top:470.4px">25.04.2020, № 67059</div>
<div class="a" style="left:11px;top:485px;width:1634px;height:32px;background:#fbfbfa"></div>
<div class="hl" style="left:11px;top:517px;width:1634px;background:#d2d9dd"></div>
<div class="sl" style="left:54px;top:501px;width:344px;background:#eef0f1"></div>
<div class="sl" style="left:514px;top:501px;width:220px;background:#eef0f1"></div>
<div class="sl" style="left:862px;top:501px;width:113px;background:#eef0f1"></div>
<div class="sl" style="left:1246px;top:501px;width:169px;background:#eef0f1"></div>
<div class="sl" style="left:1416px;top:501px;width:114px;background:#eef0f1"></div>
<div class="a" style="left:18px;top:488.7px;width:5px;height:5px;border-radius:3px;background:radial-gradient(circle at 40% 35%,#f5a080,#d64a2a 70%)"></div>
<div class="t" style="left:43px;top:486.5px">1</div>
<div class="t" style="left:57.500px;top:486.5px">26.04.2020 12:00:38</div>
<div class="t" style="left:57.500px;top:503.4px">Поступление на расчетный счет 0000-002902 от 26.04.2020 12:00:38</div>
<div class="t" style="left:402.500px;top:486.5px;color:#111;transform:scaleX(.89)">Управляющая</div>
<div class="t" style="left:402.500px;top:498.9px;color:#111;transform:scaleX(.89)">компания ...</div>
<div class="t" style="left:517.500px;top:486.5px">Прочий приход денежных средств.</div>
<div class="t" style="left:517.500px;top:503.4px">26.04.2020, № 68993</div>
<div class="a" style="left:11px;top:518px;width:1634px;height:32px;background:#fffffe"></div>
<div class="hl" style="left:11px;top:550px;width:1634px;background:#d2d9dd"></div>
<div class="sl" style="left:54px;top:534px;width:344px;background:#eef0f1"></div>
<div class="sl" style="left:514px;top:534px;width:220px;background:#eef0f1"></div>
<div class="sl" style="left:862px;top:534px;width:113px;background:#eef0f1"></div>
<div class="sl" style="left:1246px;top:534px;width:169px;background:#eef0f1"></div>
<div class="sl" style="left:1416px;top:534px;width:114px;background:#eef0f1"></div>
<div class="a" style="left:18px;top:521.7px;width:5px;height:5px;border-radius:3px;background:radial-gradient(circle at 40% 35%,#f5a080,#d64a2a 70%)"></div>
<div class="t" style="left:43px;top:519.5px">1</div>
<div class="t" style="left:57.500px;top:519.5px">26.04.2020 12:00:39</div>
<div class="t" style="left:57.500px;top:536.4px">Поступление на расчетный счет 0000-002903 от 26.04.2020 12:00:39</div>
<div class="t" style="left:402.500px;top:519.5px;color:#111;transform:scaleX(.89)">Управляющая</div>
<div class="t" style="left:402.500px;top:531.9px;color:#111;transform:scaleX(.89)">компания ...</div>
<div class="t" style="left:517.500px;top:519.5px">Прочий приход денежных средств.</div>
<div class="t" style="left:517.500px;top:536.4px">26.04.2020, № 58999</div>
<div class="a" style="left:11px;top:551px;width:1634px;height:33px;background:#fbfbfa"></div>
<div class="hl" style="left:11px;top:584px;width:1634px;background:#d2d9dd"></div>
<div class="sl" style="left:54px;top:567px;width:344px;background:#eef0f1"></div>
<div class="sl" style="left:514px;top:567px;width:220px;background:#eef0f1"></div>
<div class="sl" style="left:862px;top:567px;width:113px;background:#eef0f1"></div>
<div class="sl" style="left:1246px;top:567px;width:169px;background:#eef0f1"></div>
<div class="sl" style="left:1416px;top:567px;width:114px;background:#eef0f1"></div>
<div class="a" style="left:18px;top:555.7px;width:5px;height:5px;border-radius:3px;background:radial-gradient(circle at 40% 35%,#f5a080,#d64a2a 70%)"></div>
<div class="t" style="left:43px;top:553.5px">1</div>
<div class="t" style="left:57.500px;top:553.5px">26.04.2020 12:00:40</div>
<div class="t" style="left:57.500px;top:570.4px">Поступление на расчетный счет 0000-002904 от 26.04.2020 12:00:40</div>
<div class="t" style="left:402.500px;top:553.5px;color:#111;transform:scaleX(.89)">Управляющая</div>
<div class="t" style="left:402.500px;top:565.9px;color:#111;transform:scaleX(.89)">компания ...</div>
<div class="t" style="left:517.500px;top:553.5px">Прочий приход денежных средств.</div>
<div class="t" style="left:517.500px;top:570.4px">25.04.2020, № 106183</div>
<div class="a" style="left:11px;top:585px;width:1634px;height:32px;background:#fffffe"></div>
<div class="hl" style="left:11px;top:617px;width:1634px;background:#d2d9dd"></div>
<div class="sl" style="left:54px;top:601px;width:344px;background:#eef0f1"></div>
<div class="sl" style="left:514px;top:601px;width:220px;background:#eef0f1"></div>
<div class="sl" style="left:862px;top:601px;width:113px;background:#eef0f1"></div>
<div class="sl" style="left:1246px;top:601px;width:169px;background:#eef0f1"></div>
<div class="sl" style="left:1416px;top:601px;width:114px;background:#eef0f1"></div>
<div class="a" style="left:18px;top:588.7px;width:5px;height:5px;border-radius:3px;background:radial-gradient(circle at 40% 35%,#f5a080,#d64a2a 70%)"></div>
<div class="t" style="left:43px;top:586.5px">1</div>
<div class="t" style="left:57.500px;top:586.5px">26.04.2020 12:00:41</div>
<div class="t" style="left:57.500px;top:603.4px">Поступление на расчетный счет 0000-002905 от 26.04.2020 12:00:41</div>
<div class="t" style="left:402.500px;top:586.5px;color:#111;transform:scaleX(.89)">Управляющая</div>
<div class="t" style="left:402.500px;top:598.9px;color:#111;transform:scaleX(.89)">компания ...</div>
<div class="t" style="left:517.500px;top:586.5px">Прочий приход денежных средств.</div>
<div class="t" style="left:517.500px;top:603.4px">25.04.2020, № 1</div>
<div class="vl" style="left:53px;top:251px;height:344px"></div>
<div class="vl" style="left:398px;top:251px;height:344px"></div>
<div class="vl" style="left:513px;top:251px;height:344px"></div>
<div class="vl" style="left:734px;top:251px;height:344px"></div>
<div class="vl" style="left:861px;top:251px;height:344px"></div>
<div class="vl" style="left:975px;top:251px;height:344px"></div>
<div class="vl" style="left:1060px;top:251px;height:344px"></div>
<div class="vl" style="left:1152px;top:251px;height:344px"></div>
<div class="vl" style="left:1245px;top:251px;height:344px"></div>
<div class="vl" style="left:1415px;top:251px;height:344px"></div>
<div class="vl" style="left:1530px;top:251px;height:344px"></div>
<div class="a" style="left:53px;top:351px;width:1px;height:33px;background:#bbd6ee"></div>
<div class="a" style="left:398px;top:351px;width:1px;height:33px;background:#bbd6ee"></div>
<div class="a" style="left:513px;top:351px;width:1px;height:33px;background:#bbd6ee"></div>
<div class="a" style="left:734px;top:351px;width:1px;height:33px;background:#bbd6ee"></div>
<div class="a" style="left:861px;top:351px;width:1px;height:33px;background:#bbd6ee"></div>
<div class="a" style="left:975px;top:351px;width:1px;height:33px;background:#bbd6ee"></div>
<div class="a" style="left:1060px;top:351px;width:1px;height:33px;background:#bbd6ee"></div>
<div class="a" style="left:1152px;top:351px;width:1px;height:33px;background:#bbd6ee"></div>
<div class="a" style="left:1245px;top:351px;width:1px;height:33px;background:#bbd6ee"></div>
<div class="a" style="left:1415px;top:351px;width:1px;height:33px;background:#bbd6ee"></div>
<div class="a" style="left:1530px;top:351px;width:1px;height:33px;background:#bbd6ee"></div>
<div class="a" style="left:1645px;top:213px;width:10px;height:382px;background:#f9f9f7;border-left:1px solid #b3ad8e"></div>
<div class="a" style="left:1646px;top:214px;width:9px;height:18px;background:linear-gradient(#fbf9ee,#f5f1dc);border-bottom:1px solid #d9d3ba"></div>
<svg class="a" style="left:1647px;top:219px" width="8" height="7" viewBox="0 0 8 7"><path d="M4.200 0.300 L8 6.500 H0.400Z" fill="#858585"/></svg>
<div class="a" style="left:1646px;top:538px;width:9px;height:13px;background:#f6f1da;border-top:1px solid #d2caa8;border-bottom:1px solid #d2caa8"></div>
<div class="a" style="left:1649.500px;top:542.500px;width:4.500px;height:4.500px;border-radius:3px;background:#b4b0a0"></div>
<div class="a" style="left:398px;top:586px;width:215px;height:12px;background:#fffde8;border:1px solid #b9b08a"></div>
<div class="t" style="left:402.500px;top:587.500px;color:#111">Управляющая компания "Северо-Запад" ООО</div>
<svg class="a" style="left:0;top:300px" width="880" height="100" viewBox="0 300 880 100"><rect x="4.375" y="312.275" width="864.05" height="76" rx="1.6" fill="none" stroke="#ff0000" stroke-width="4.35"/></svg>
</body></html>
